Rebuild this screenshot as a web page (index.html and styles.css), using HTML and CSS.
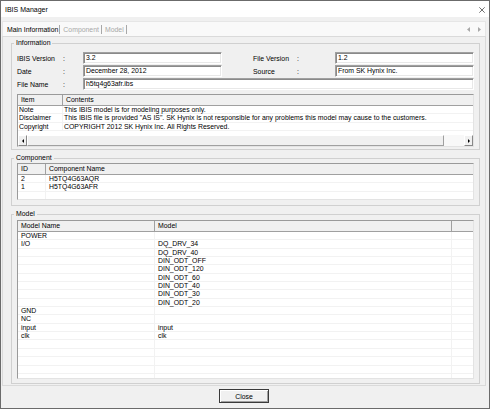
FILE: index.html
```html
<!DOCTYPE html>
<html lang="en">
<head>
    <meta charset="UTF-8">
    <title>IBIS Manager</title>
    <link rel="stylesheet" href="styles.css">
</head>
<body>
    <div class="window">
        <div class="titlebar">
            <span class="title">IBIS Manager</span>
            <svg class="close-x" width="6" height="6" viewBox="0 0 6 6">
                <path d="M0.3 0.3L5.7 5.7M5.7 0.3L0.3 5.7" stroke="#333" stroke-width="0.7" fill="none"/>
            </svg>
        </div>

        <div class="client">
            <div class="tabcontrol">
                <div class="tabstrip">
                    <span class="tab tab-first">Main Information</span>
                    <span class="tab disabled">Component</span>
                    <span class="tab disabled">Model</span>
                    <svg class="tab-arrows" width="15" height="5" viewBox="0 0 15 5">
                        <path d="M3 0L0 2.5L3 5Z" fill="#a8a8a8"/>
                        <path d="M11 0L14 2.5L11 5Z" fill="#a8a8a8"/>
                    </svg>
                </div>

                <div class="tabpage">
                    <fieldset class="group group-info">
                        <legend>Information</legend>
                        <div class="fields">
                            <label>IBIS Version</label><span class="colon">:</span><div class="textbox">3.2</div>
                            <span></span>
                            <label>File Version</label><span class="colon">:</span><div class="textbox">1.2</div>

                            <label>Date</label><span class="colon">:</span><div class="textbox">December 28, 2012</div>
                            <span></span>
                            <label>Source</label><span class="colon">:</span><div class="textbox">From SK Hynix Inc.</div>

                            <label>File Name</label><span class="colon">:</span><div class="textbox textbox-wide">h5tq4g63afr.ibs</div>
                        </div>

                        <div class="listview list-info">
                            <div class="lv-header">
                                <span>Item</span><span>Contents</span>
                            </div>
                            <div class="lv-row"><span>Note</span><span>This IBIS model is for modeling purposes only.</span></div>
                            <div class="lv-row"><span>Disclaimer</span><span>This IBIS file is provided "AS IS". SK Hynix is not responsible for any problems this model may cause to the customers.</span></div>
                            <div class="lv-row"><span>Copyright</span><span>COPYRIGHT 2012 SK Hynix Inc. All Rights Reserved.</span></div>
                            <div class="hscroll">
                                <span class="sb-btn sb-left"></span>
                                <span class="sb-thumb"></span>
                                <span class="sb-track"></span>
                                <span class="sb-btn sb-right"></span>
                            </div>
                        </div>
                    </fieldset>

                    <fieldset class="group group-component">
                        <legend>Component</legend>
                        <div class="listview list-component">
                            <div class="lv-header">
                                <span>ID</span><span>Component Name</span>
                            </div>
                            <div class="lv-row"><span>2</span><span>H5TQ4G63AQR</span></div>
                            <div class="lv-row"><span>1</span><span>H5TQ4G63AFR</span></div>
                            <div class="lv-row"><span></span><span></span></div>
                            <div class="lv-row"><span></span><span></span></div>
                        </div>
                    </fieldset>

                    <fieldset class="group group-model">
                        <legend>Model</legend>
                        <div class="listview list-model">
                            <div class="lv-header">
                                <span>Model Name</span><span>Model</span><span></span>
                            </div>
                            <div class="lv-row"><span>POWER</span><span></span><span></span></div>
                            <div class="lv-row"><span>I/O</span><span>DQ_DRV_34</span><span></span></div>
                            <div class="lv-row"><span></span><span>DQ_DRV_40</span><span></span></div>
                            <div class="lv-row"><span></span><span>DIN_ODT_OFF</span><span></span></div>
                            <div class="lv-row"><span></span><span>DIN_ODT_120</span><span></span></div>
                            <div class="lv-row"><span></span><span>DIN_ODT_60</span><span></span></div>
                            <div class="lv-row"><span></span><span>DIN_ODT_40</span><span></span></div>
                            <div class="lv-row"><span></span><span>DIN_ODT_30</span><span></span></div>
                            <div class="lv-row"><span></span><span>DIN_ODT_20</span><span></span></div>
                            <div class="lv-row"><span>GND</span><span></span><span></span></div>
                            <div class="lv-row"><span>NC</span><span></span><span></span></div>
                            <div class="lv-row"><span>input</span><span>input</span><span></span></div>
                            <div class="lv-row"><span>clk</span><span>clk</span><span></span></div>
                            <div class="lv-row"><span></span><span></span><span></span></div>
                            <div class="lv-row"><span></span><span></span><span></span></div>
                            <div class="lv-row"><span></span><span></span><span></span></div>
                            <div class="lv-row"><span></span><span></span><span></span></div>
                            <div class="lv-row"><span></span><span></span><span></span></div>
                        </div>
                    </fieldset>
                </div>
            </div>

            <div class="actions">
                <button class="btn-close">Close</button>
            </div>
        </div>
    </div>
</body>
</html>
```

FILE: styles.css
```css
* {
    box-sizing: border-box;
}

body {
    margin: 0;
    background: #f0f0f0;
    font-family: "Liberation Sans", Arial, sans-serif;
    font-size: 6.9px;
    color: #000;
}

.window {
    width: 490px;
    height: 409px;
    border: 1px solid #6b6b6b;
    background: #f0f0f0;
    display: flex;
    flex-direction: column;
}

/* title bar */
.titlebar {
    height: 16px;
    flex: none;
    background: #fff;
    display: flex;
    align-items: center;
    justify-content: space-between;
    padding: 0 4px 0 4px;
}

.title {
    font-size: 7px;
}

.close-x {
    margin-top: 1px;
}

.client {
    flex: 1;
    display: flex;
    flex-direction: column;
    padding: 4px 3px 0 1px;
}

/* tabs */
.tabstrip {
    height: 15px;
    background: #f9f9f9;
    border: 1px solid #e6e6e6;
    border-bottom: none;
    display: flex;
    align-items: center;
}

.tab {
    height: 9px;
    line-height: 9px;
    padding: 0 2px 0 3px;
    border-right: 1px solid #a8a8a8;
    white-space: nowrap;
}

.tab-first {
    padding-left: 4px;
    padding-right: 1px;
}

.tab.disabled {
    color: #a8a8a8;
}

.tab-arrows {
    margin-left: auto;
    margin-right: 3px;
}

.tabpage {
    height: 350px;
    border: 1px solid #dadada;
    padding: 2px 5px 0 8px;
}

/* group boxes */
.group {
    margin: 0;
    min-width: 0;
    border: 1px solid #d0d0d0;
    padding: 0 5px 2px 5px;
}

.group legend {
    padding: 0 2px;
    margin-left: -3px;
    line-height: 8px;
}

.group-info {
    padding-top: 5px;
}

.group-component {
    margin-top: 4px;
    padding-top: 1px;
    padding-bottom: 5px;
}

.group-model {
    margin-top: 4px;
    padding-top: 2px;
    padding-bottom: 4px;
}

/* information fields */
.fields {
    display: grid;
    grid-template-columns: 46px 20px 139px 31px 44px 38px 1fr;
    grid-auto-rows: 12px;
    row-gap: 1px;
    align-items: center;
}

.fields label {
    white-space: nowrap;
}

.textbox {
    height: 12px;
    background: #fff;
    border: 1px solid;
    border-color: #a0a0a0 #fff #fff #a0a0a0;
    box-shadow: inset 1px 1px 0 #8a8a8a, inset -1px -1px 0 #e8e8e8;
    padding: 0 2px;
    line-height: 10px;
    white-space: nowrap;
    overflow: hidden;
}

.textbox-wide {
    grid-column: 3 / -1;
}

/* list views */
.listview {
    background: #fff;
    border: 1px solid;
    border-color: #9a9a9a #e3e3e3 #e3e3e3 #9a9a9a;
    display: flex;
    flex-direction: column;
    overflow: hidden;
}

.lv-header {
    display: grid;
    flex: none;
    height: 11px;
    background: #f0f0f0;
    border-bottom: 1px solid #a0a0a0;
}

.lv-header span {
    border-right: 1px solid #a0a0a0;
    padding-left: 3px;
    line-height: 10px;
    white-space: nowrap;
}

.lv-header span:last-child {
    border-right: none;
}

.lv-row {
    display: grid;
    flex: none;
    height: 8.35px;
    border-bottom: 1px solid #f2f2f2;
    line-height: 7.6px;
}

.lv-row span {
    border-right: 1px solid #f2f2f2;
    padding-left: 3px;
    white-space: nowrap;
}

.lv-row span:last-child {
    border-right: none;
}

.list-info {
    height: 53px;
    margin-top: 4px;
}

.list-info .lv-header,
.list-info .lv-row {
    grid-template-columns: 45px 1fr;
}

.list-info .lv-row span {
    padding-left: 1px;
}

.list-component {
    height: 37px;
}

.list-component .lv-header,
.list-component .lv-row {
    grid-template-columns: 28px 1fr;
}

.list-model {
    height: 159px;
}

.list-model .lv-header,
.list-model .lv-row {
    grid-template-columns: 137px 297px 1fr;
}

/* horizontal scrollbar */
.hscroll {
    margin-top: auto;
    height: 11px;
    flex: none;
    display: flex;
    background: #f0f0f0;
}

.sb-btn {
    width: 9px;
    border: 1px solid;
    border-color: #fff #888 #888 #fff;
    background: #f0f0f0;
    display: flex;
    align-items: center;
    justify-content: center;
}

.sb-left::after {
    content: "";
    border-right: 2px solid #000;
    border-top: 2px solid transparent;
    border-bottom: 2px solid transparent;
}

.sb-right::after {
    content: "";
    border-left: 2px solid #000;
    border-top: 2px solid transparent;
    border-bottom: 2px solid transparent;
}

.sb-thumb {
    width: 417px;
    border: 1px solid;
    border-color: #fff #a0a0a0 #a0a0a0 #fff;
    background: #f0f0f0;
}

.sb-track {
    flex: 1;
    background: #f8f8f8;
}

/* bottom button */
.actions {
    display: flex;
    justify-content: center;
    margin-top: 3px;
}

.btn-close {
    width: 50px;
    height: 14px;
    padding: 0;
    font-family: inherit;
    font-size: 6.9px;
    color: #000;
    background: #f0f0f0;
    border: 1px solid #3a3a3a;
    box-shadow: inset 1px 1px 0 #fff, inset -1px -1px 0 #a0a0a0;
    border-radius: 0;
}
```
